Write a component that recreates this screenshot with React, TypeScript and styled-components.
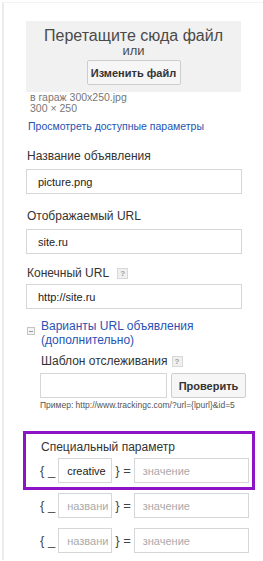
import React from 'react';
import styled, { createGlobalStyle } from 'styled-components';

const GlobalStyle = createGlobalStyle`
  html, body {
    margin: 0;
    padding: 0;
    background: #fff;
    font-family: "Liberation Sans", Arial, sans-serif;
  }
`;

const Page = styled.div`
  margin: 2px 0 0 2px;
  min-height: calc(100vh - 3px);
  border-left: 2px solid #ebebeb;
  border-top: 1px solid #f3f3f3;
  padding: 18px 0 0 22px;
  box-sizing: border-box;
`;

const DropZone = styled.div`
  width: 215px;
  height: 71px;
  box-sizing: border-box;
  padding-top: 6px;
  background: #f1f1f1;
  display: flex;
  flex-direction: column;
  align-items: center;
`;

const DropTitle = styled.div`
  font-size: 16px;
  line-height: 17px;
  color: #4a4a4a;
`;

const DropOr = styled.div`
  font-size: 13px;
  line-height: 14px;
  color: #4a4a4a;
`;

const GrayButton = styled.button<{ $w: number }>`
  width: ${p => p.$w}px;
  height: 25px;
  margin-top: ${p => (p.$w > 80 ? 2 : 0)}px;
  padding: 0;
  flex: none;
  border: 1px solid #cdcdcd;
  border-radius: 2px;
  background: #f6f6f6;
  font-family: "Liberation Sans", Arial, sans-serif;
  font-size: 11px;
  font-weight: bold;
  color: #333;
`;

const FileInfo = styled.div`
  padding-left: 4px;
  font-size: 10.5px;
  line-height: 11px;
  color: #777;
`;

const Link = styled.a`
  display: block;
  margin: 6px 0 0 2px;
  font-size: 10.5px;
  line-height: 13px;
  color: #2553b0;
  text-decoration: none;
`;

const Field = styled.div<{ $top: number; $gap: number }>`
  margin-top: ${p => p.$top}px;
  display: flex;
  flex-direction: column;
  align-items: flex-start;
  gap: ${p => p.$gap}px;
`;

const Label = styled.div`
  display: flex;
  align-items: center;
  font-size: 12px;
  line-height: 14px;
  color: #333;
  padding-left: 1px;
`;

const Help = styled.span<{ $left: number }>`
  display: inline-flex;
  align-items: center;
  justify-content: center;
  width: 9px;
  height: 9px;
  margin-left: ${p => p.$left}px;
  border: 1px solid #d8d8d8;
  background: #f0f0f0;
  color: #a0a0a0;
  font-size: 8px;
  font-weight: bold;
  line-height: 9px;
`;

const TextInput = styled.div<{ $w: number; $muted?: boolean }>`
  width: ${p => p.$w}px;
  height: 25px;
  box-sizing: border-box;
  flex: none;
  border: 1px solid #d6d6d6;
  padding-left: ${p => (p.$w > 150 ? 11 : 8)}px;
  display: flex;
  align-items: center;
  overflow: hidden;
  white-space: nowrap;
  font-size: 11px;
  color: ${p => (p.$muted ? '#aaa' : '#222')};
  background: #fff;
`;

const Toggle = styled.div`
  margin-top: 10px;
  display: flex;
  align-items: flex-start;
  gap: 6px;
`;

const MinusBox = styled.span`
  width: 8px;
  height: 8px;
  margin: 8px 0 0 1px;
  box-sizing: border-box;
  border: 1px solid #c4c4c4;
  background: #f4f4f4;
  display: flex;
  align-items: center;
  justify-content: center;
  &::after {
    content: '';
    width: 4px;
    height: 1px;
    background: #999;
  }
`;

const ToggleText = styled.div`
  font-size: 12px;
  line-height: 14px;
  color: #2a52b4;
`;

const Indent = styled.div`
  padding-left: 14px;
`;

const TrackRow = styled.div`
  display: flex;
  gap: 4px;
`;

const Example = styled.div`
  margin-top: 2px;
  font-size: 8.5px;
  line-height: 10px;
  color: #555;
  white-space: nowrap;
`;

const Highlight = styled.div`
  margin: 21px 0 0 -3px;
  width: 232px;
  box-sizing: border-box;
  border: 3px solid #8c13c6;
  padding: 6px 0 4px 14px;
`;

const ParamRow = styled.div<{ $top: number }>`
  margin-top: ${p => p.$top}px;
  display: flex;
  align-items: center;
  gap: 3px;
`;

const Brace = styled.span`
  font-size: 13px;
  color: #444;
  white-space: pre;
`;

function Param({ name, top }: { name?: string; top: number }) {
  return (
    <ParamRow $top={top}>
      <Brace>{'{ _'}</Brace>
      <TextInput $w={54} $muted={!name}>{name || 'названи'}</TextInput>
      <Brace>{'} ='}</Brace>
      <TextInput $w={115} $muted>значение</TextInput>
    </ParamRow>
  );
}

export default function App() {
  return (
    <>
      <GlobalStyle />
      <Page>
        <DropZone>
          <DropTitle>Перетащите сюда файл</DropTitle>
          <DropOr>или</DropOr>
          <GrayButton $w={94}>Изменить файл</GrayButton>
        </DropZone>
        <FileInfo>
          в гараж 300x250.jpg
          <br />
          300 × 250
        </FileInfo>
        <Link href="#">Просмотреть доступные параметры</Link>

        <Field $top={16} $gap={6}>
          <Label>Название объявления</Label>
          <TextInput $w={216}>picture.png</TextInput>
        </Field>
        <Field $top={15} $gap={6}>
          <Label>Отображаемый URL</Label>
          <TextInput $w={216}>site.ru</TextInput>
        </Field>
        <Field $top={12} $gap={4}>
          <Label>
            Конечный URL<Help $left={8}>?</Help>
          </Label>
          <TextInput $w={216}>http://site.ru</TextInput>
        </Field>

        <Toggle>
          <MinusBox />
          <ToggleText>
            Варианты URL объявления
            <br />
            (дополнительно)
          </ToggleText>
        </Toggle>

        <Indent>
          <Field $top={7} $gap={5}>
            <Label>
              Шаблон отслеживания<Help $left={4}>?</Help>
            </Label>
            <TrackRow>
              <TextInput $w={127} />
              <GrayButton $w={75}>Проверить</GrayButton>
            </TrackRow>
          </Field>
          <Example>Пример: http://www.trackingc.com/?url={'{lpurl}'}&amp;id=5</Example>
        </Indent>

        <Highlight>
          <Label>Специальный параметр</Label>
          <Param name="creative" top={4} />
        </Highlight>
        <Indent>
          <Param top={3} />
          <Param top={10} />
        </Indent>
      </Page>
    </>
  );
}
